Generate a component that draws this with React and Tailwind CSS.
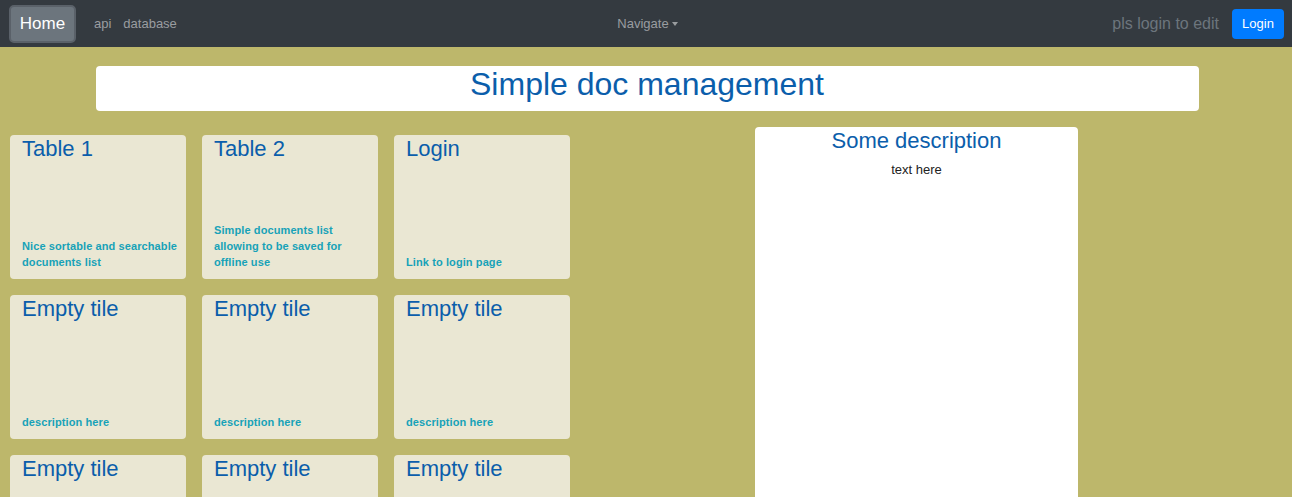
export default function App() {
  const tiles = [
    { t: "Table 1", d: "Nice sortable and searchable documents list" },
    { t: "Table 2", d: "Simple documents list allowing to be saved for offline use" },
    { t: "Login", d: "Link to login page" },
    { t: "Empty tile", d: "description here" },
    { t: "Empty tile", d: "description here" },
    { t: "Empty tile", d: "description here" },
    { t: "Empty tile", d: "description here" },
    { t: "Empty tile", d: "description here" },
    { t: "Empty tile", d: "description here" },
  ];
  return (
    <div className="min-h-screen bg-[#bdb76b]" style={{ fontFamily: '"Liberation Sans", Arial, sans-serif' }}>
      <nav className="h-[47px] bg-[#343a40] flex items-center pl-[9px] pr-[8px]">
        <div className="flex items-center flex-1">
          <button className="h-[38px] w-[67px] rounded-[5px] bg-[#6c757d] border-2 border-[#5a6169] text-white text-[17px]">Home</button>
          <a className="ml-[18px] text-[13px] text-[#9a9da0]">api</a>
          <a className="ml-[12px] text-[13px] text-[#9a9da0]">database</a>
        </div>
        <div className="flex items-center text-[13px] text-[#9a9da0] ml-[2px]">
          Navigate
          <span className="ml-[3px] inline-block w-0 h-0 border-l-[3.5px] border-r-[3.5px] border-t-[4px] border-l-transparent border-r-transparent border-t-[#9a9da0]"></span>
        </div>
        <div className="flex items-center flex-1 justify-end">
          <span className="text-[16px] text-[#6c757d] mr-[13px]">pls login to edit</span>
          <button className="h-[30px] w-[52px] rounded-[4px] bg-[#007bff] text-white text-[13px]">Login</button>
        </div>
      </nav>
      <div className="pt-[19px] flex justify-center">
        <div className="ml-[2px] w-[1103px] h-[45px] bg-white rounded-[4px] flex items-center justify-center pb-[9px]">
          <h1 className="text-[32px] text-[#0b5eab] leading-none">Simple doc management</h1>
        </div>
      </div>
      <div className="flex pt-[16px]">
        <div className="pl-[10px] pt-[8px] grid grid-cols-[176px_176px_176px] gap-x-[16px] gap-y-[16px]">
          {tiles.map((x, i) => (
            <div key={i} className="h-[144px] rounded-[4px] bg-[#eae7d3] flex flex-col justify-between pl-[12px] pr-[6px] pb-[9px]">
              <div className="text-[22px] leading-[28px] text-[#0b5eab]">{x.t}</div>
              <div className="text-[11px] leading-[16px] font-bold text-[#17a2b8] tracking-[0.1px]">{x.d}</div>
            </div>
          ))}
        </div>
        <div className="ml-[185px] w-[323px] bg-white rounded-t-[4px] flex flex-col items-center min-h-[380px]">
          <div className="text-[22px] text-[#0b5eab] leading-[28px]">Some description</div>
          <div className="text-[13px] text-[#222] mt-[5px]">text here</div>
        </div>
      </div>
    </div>
  );
}
